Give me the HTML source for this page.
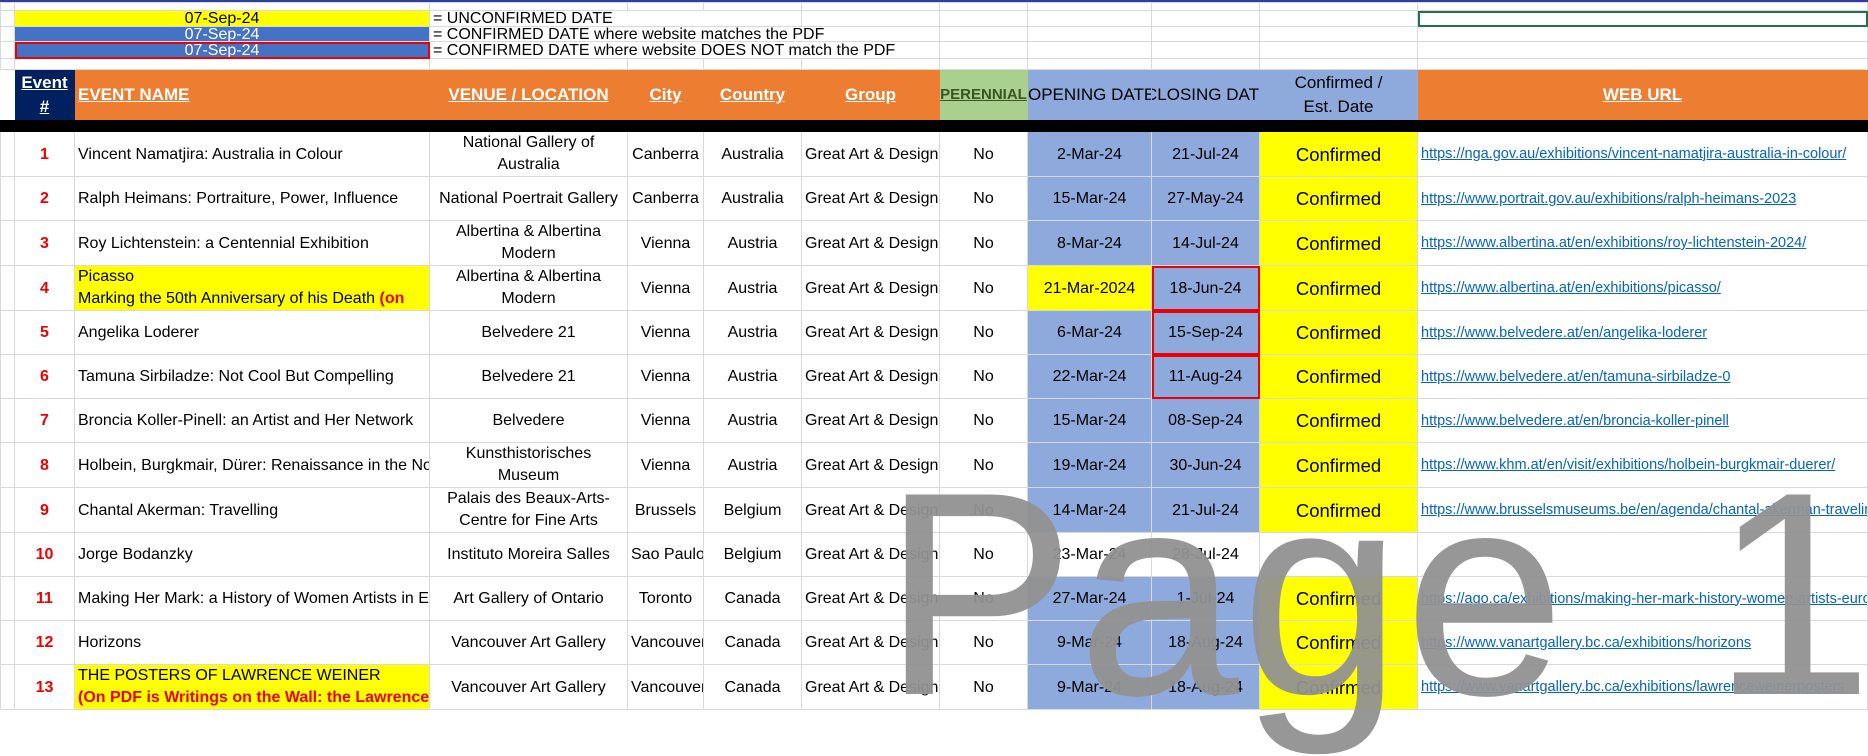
<!DOCTYPE html>
<html><head><meta charset="utf-8"><style>
body{margin:0;width:1868px;height:706px;overflow:hidden;background:#fff;position:relative}
#w{position:absolute;left:0;top:0;width:1868px;height:706px;font-family:"Liberation Sans",sans-serif;font-size:16px;color:#000}
table{border-collapse:collapse;table-layout:fixed;position:absolute;left:0;top:2px;width:1867px}
td{border:1px solid #d9d9d9;padding:0 3px;white-space:nowrap;overflow:hidden;text-align:center;line-height:19px}
.l{text-align:left}
.t{line-height:22px}
.n{color:#e00;font-weight:bold}
.b{background:#8ea9db}.y{background:#ffff00}
.c{font-size:18.5px}
a{color:#0563c1;text-decoration:underline;font-size:14.5px}
.h td{color:#fff;font-weight:bold;text-decoration:underline;background:#ed7d31;font-size:17px;border-color:#ed7d31}
.h td.nb{color:#000;font-weight:normal;text-decoration:none;background:#8ea9db;border-color:#8ea9db;padding:0}
.r{outline:2px solid #e00;outline-offset:-2px}
.s td{line-height:13px;font-size:16px}
#wm{position:absolute;left:882px;top:449px;font-family:"Liberation Sans",sans-serif;font-size:290px;color:rgba(145,145,145,.95);line-height:290px;letter-spacing:2px;word-spacing:62px;white-space:nowrap}
</style></head><body><div id="w">
<div style="position:absolute;left:0;top:0;width:1868px;height:2px;background:#2f3f9f"></div>
<table>
<colgroup><col style="width:14px"><col style="width:60px"><col style="width:355px"><col style="width:198px"><col style="width:76px"><col style="width:98px"><col style="width:138px"><col style="width:88px"><col style="width:124px"><col style="width:108px"><col style="width:158px"><col style="width:450px"></colgroup>
<tr style="height:8px"><td></td><td colspan="2"></td><td></td><td></td><td></td><td></td><td></td><td></td><td></td><td></td><td></td></tr>
<tr class="s" style="height:16px"><td></td><td colspan="2" style="background:#ffff00">07-Sep-24</td><td colspan="3" class="l" style="overflow:visible">= UNCONFIRMED DATE</td><td></td><td></td><td></td><td></td><td></td><td style="outline:2px solid #217346;outline-offset:-2px"></td></tr>
<tr class="s" style="height:15px"><td></td><td colspan="2" style="background:#4472c4;color:#fff">07-Sep-24</td><td colspan="4" class="l" style="overflow:visible">= CONFIRMED DATE where website matches the PDF</td><td></td><td></td><td></td><td></td><td></td></tr>
<tr class="s" style="height:17px"><td></td><td colspan="2" style="background:#4472c4;color:#fff;outline:2px solid #e00;outline-offset:-2px">07-Sep-24</td><td colspan="4" class="l" style="overflow:visible">= CONFIRMED DATE where website DOES NOT match the PDF</td><td></td><td></td><td></td><td></td><td></td></tr>
<tr style="height:11px"><td></td><td colspan="2"></td><td></td><td></td><td></td><td></td><td></td><td></td><td></td><td></td><td></td></tr>
<tr class="h" style="height:50px"><td style="background:#fff;border-color:#fff"></td><td style="background:#002060;border-color:#002060;line-height:24px;padding:0">Event<br>#</td><td class="l">EVENT NAME</td><td>VENUE / LOCATION</td><td>City</td><td>Country</td><td>Group</td><td style="background:#a9d08e;border-color:#a9d08e;color:#375623;font-size:15px;padding:0">PERENNIAL</td><td class="nb">OPENING DATE</td><td class="nb" style="direction:rtl">CLOSING DAT</td><td class="nb" style="line-height:24px">Confirmed /<br>Est. Date</td><td>WEB URL</td></tr>
<tr style="height:12px"><td colspan="12" style="background:#000;border-color:#000"></td></tr>
<tr style="height:44px"><td></td><td class="n">1</td><td class="l">Vincent Namatjira: Australia in Colour</td><td class="t">National Gallery of<br>Australia</td><td>Canberra</td><td>Australia</td><td>Great Art &amp; Design</td><td>No</td><td class="b">2-Mar-24</td><td class="b">21-Jul-24</td><td class="y c">Confirmed</td><td class="l"><a>https://nga.gov.au/exhibitions/vincent-namatjira-australia-in-colour/</a></td></tr>
<tr style="height:44px"><td></td><td class="n">2</td><td class="l">Ralph Heimans: Portraiture, Power, Influence</td><td>National Poertrait Gallery</td><td>Canberra</td><td>Australia</td><td>Great Art &amp; Design</td><td>No</td><td class="b">15-Mar-24</td><td class="b">27-May-24</td><td class="y c">Confirmed</td><td class="l"><a>https://www.portrait.gov.au/exhibitions/ralph-heimans-2023</a></td></tr>
<tr style="height:44px"><td></td><td class="n">3</td><td class="l">Roy Lichtenstein: a Centennial Exhibition</td><td class="t">Albertina &amp; Albertina<br>Modern</td><td>Vienna</td><td>Austria</td><td>Great Art &amp; Design</td><td>No</td><td class="b">8-Mar-24</td><td class="b">14-Jul-24</td><td class="y c">Confirmed</td><td class="l"><a>https://www.albertina.at/en/exhibitions/roy-lichtenstein-2024/</a></td></tr>
<tr style="height:44px"><td></td><td class="n">4</td><td class="l y t">Picasso<br>Marking the 50th Anniversary of his Death <span style="color:#e00;font-weight:bold">(on</span></td><td class="t">Albertina &amp; Albertina<br>Modern</td><td>Vienna</td><td>Austria</td><td>Great Art &amp; Design</td><td>No</td><td class="y">21-Mar-2024</td><td class="b r">18-Jun-24</td><td class="y c">Confirmed</td><td class="l"><a>https://www.albertina.at/en/exhibitions/picasso/</a></td></tr>
<tr style="height:44px"><td></td><td class="n">5</td><td class="l">Angelika Loderer</td><td>Belvedere 21</td><td>Vienna</td><td>Austria</td><td>Great Art &amp; Design</td><td>No</td><td class="b">6-Mar-24</td><td class="b r">15-Sep-24</td><td class="y c">Confirmed</td><td class="l"><a>https://www.belvedere.at/en/angelika-loderer</a></td></tr>
<tr style="height:44px"><td></td><td class="n">6</td><td class="l">Tamuna Sirbiladze: Not Cool But Compelling</td><td>Belvedere 21</td><td>Vienna</td><td>Austria</td><td>Great Art &amp; Design</td><td>No</td><td class="b">22-Mar-24</td><td class="b r">11-Aug-24</td><td class="y c">Confirmed</td><td class="l"><a>https://www.belvedere.at/en/tamuna-sirbiladze-0</a></td></tr>
<tr style="height:44px"><td></td><td class="n">7</td><td class="l">Broncia Koller-Pinell: an Artist and Her Network</td><td>Belvedere</td><td>Vienna</td><td>Austria</td><td>Great Art &amp; Design</td><td>No</td><td class="b">15-Mar-24</td><td class="b">08-Sep-24</td><td class="y c">Confirmed</td><td class="l"><a>https://www.belvedere.at/en/broncia-koller-pinell</a></td></tr>
<tr style="height:44px"><td></td><td class="n">8</td><td class="l">Holbein, Burgkmair, Dürer: Renaissance in the North</td><td class="t">Kunsthistorisches<br>Museum</td><td>Vienna</td><td>Austria</td><td>Great Art &amp; Design</td><td>No</td><td class="b">19-Mar-24</td><td class="b">30-Jun-24</td><td class="y c">Confirmed</td><td class="l"><a>https://www.khm.at/en/visit/exhibitions/holbein-burgkmair-duerer/</a></td></tr>
<tr style="height:44px"><td></td><td class="n">9</td><td class="l">Chantal Akerman: Travelling</td><td class="t">Palais des Beaux-Arts-<br>Centre for Fine Arts</td><td>Brussels</td><td>Belgium</td><td>Great Art &amp; Design</td><td>No</td><td class="b">14-Mar-24</td><td class="b">21-Jul-24</td><td class="y c">Confirmed</td><td class="l"><a>https://www.brusselsmuseums.be/en/agenda/chantal-akerman-traveling</a></td></tr>
<tr style="height:44px"><td></td><td class="n">10</td><td class="l">Jorge Bodanzky</td><td>Instituto Moreira Salles</td><td>Sao Paulo</td><td>Belgium</td><td>Great Art &amp; Design</td><td>No</td><td>23-Mar-24</td><td>28-Jul-24</td><td></td><td></td></tr>
<tr style="height:44px"><td></td><td class="n">11</td><td class="l">Making Her Mark: a History of Women Artists in Europe</td><td>Art Gallery of Ontario</td><td>Toronto</td><td>Canada</td><td>Great Art &amp; Design</td><td>No</td><td class="b">27-Mar-24</td><td class="b">1-Jul-24</td><td class="y c">Confirmed</td><td class="l"><a>https://ago.ca/exhibitions/making-her-mark-history-women-artists-europe</a></td></tr>
<tr style="height:44px"><td></td><td class="n">12</td><td class="l">Horizons</td><td>Vancouver Art Gallery</td><td>Vancouver</td><td>Canada</td><td>Great Art &amp; Design</td><td>No</td><td class="b">9-Mar-24</td><td class="b">18-Aug-24</td><td class="y c">Confirmed</td><td class="l"><a>https://www.vanartgallery.bc.ca/exhibitions/horizons</a></td></tr>
<tr style="height:44px"><td></td><td class="n">13</td><td class="l y t">THE POSTERS OF LAWRENCE WEINER<br><span style="color:#e00;font-weight:bold">(On PDF is Writings on the Wall: the Lawrence</span></td><td>Vancouver Art Gallery</td><td>Vancouver</td><td>Canada</td><td>Great Art &amp; Design</td><td>No</td><td class="b">9-Mar-24</td><td class="b">18-Aug-24</td><td class="y c">Confirmed</td><td class="l"><a>https://www.vanartgallery.bc.ca/exhibitions/lawrenceweinerposters</a></td></tr>
</table>
<div id="wm">Page 1</div>
</div></body></html>
